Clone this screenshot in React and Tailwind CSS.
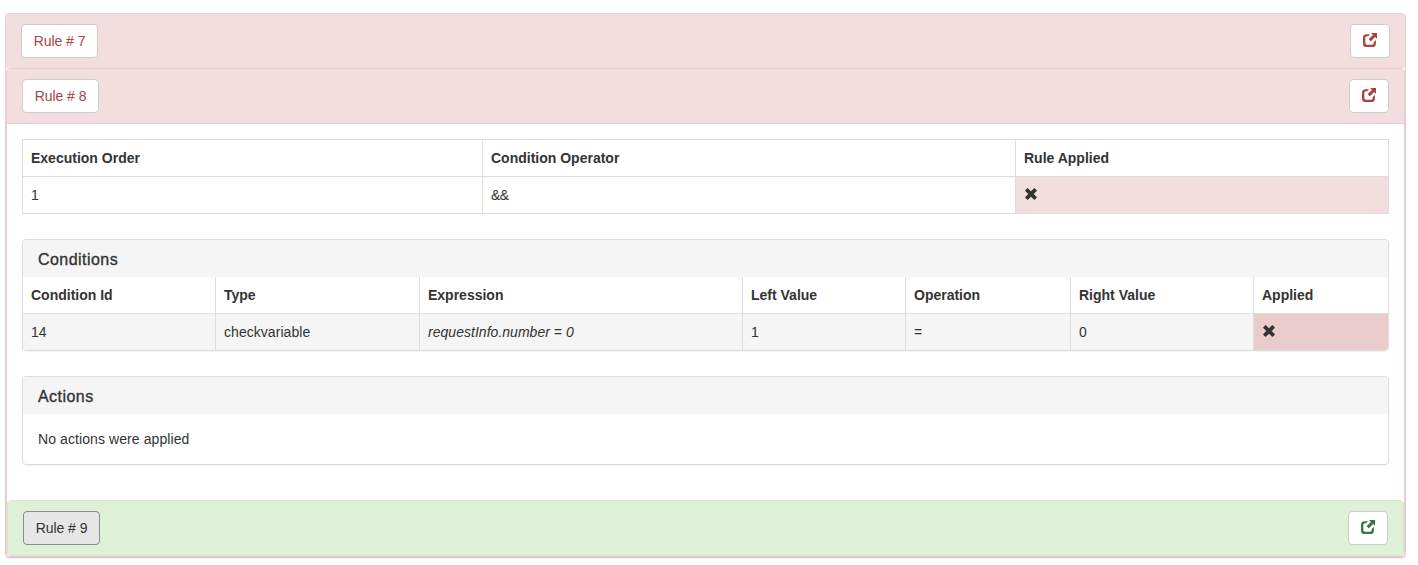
const cell = "px-2 text-left";

function OpenIcon() {
  return (
    <svg viewBox="0 0 14 14" className="h-3.5 w-3.5 fill-current" aria-hidden="true">
      <path d="M3.6 1.2H7L5.2 3.3H3.9Q2.3 3.3 2.3 4.9V10.1Q2.3 11.7 3.9 11.7H9.1Q10.7 11.7 10.7 10.1V9L12.9 7V10.4Q12.9 14 9.3 14H3.6Q0 14 0 10.4V4.8Q0 1.2 3.6 1.2ZM8.2 0H14V5.8L12.1 4.1L8.2 8Q7.8 8.4 7.4 8L6 6.6Q5.6 6.2 6 5.8L9.9 1.9Z" />
    </svg>
  );
}

function CrossIcon() {
  return (
    <svg viewBox="0 0 14 14" className="-mt-0.5 block h-3.5 w-3.5 fill-[#333]" aria-label="Not applied">
      <path d="M3.3 1.2Q3.6 1 3.9 1.3L7 4.3 10.1 1.3Q10.4 1 10.7 1.3L12.7 3.3Q13 3.6 12.7 3.9L9.7 7 12.7 10.1Q13 10.4 12.7 10.7L10.7 12.7Q10.4 13 10.1 12.7L7 9.7 3.9 12.7Q3.6 13 3.3 12.7L1.3 10.7Q1 10.4 1.3 10.1L4.3 7 1.3 3.9Q1 3.6 1.3 3.3Z" />
    </svg>
  );
}

function Heading({ label, color, buttonClass }) {
  return (
    <div className={"flex h-[54px] items-center justify-between px-[15px] " + color}>
      <button className={"h-[34px] w-[77px] rounded border text-center text-[14px] tracking-[-0.05px] " + buttonClass}>{label}</button>
      <button aria-label="Open rule" className="flex h-[34px] w-10 items-center justify-center rounded border border-[#ccc] bg-white pr-px pb-0.5">
        <OpenIcon />
      </button>
    </div>
  );
}

function Title({ children }) {
  return (
    <h3 className="flex h-[37px] items-center rounded-t-[3px] bg-[#f5f5f5] px-[15px] pt-0.5 text-[16px] font-normal tracking-[0.45px] [-webkit-text-stroke:0.35px_#333]">
      {children}
    </h3>
  );
}

const columns = [
  ["Condition Id", "w-[193px]"],
  ["Type", "w-[204px]"],
  ["Expression", "w-[323px]"],
  ["Left Value", "w-[163px]"],
  ["Operation", "w-[165px]"],
  ["Right Value", "w-[183px]"],
  ["Applied", ""],
];

function RuleTable() {
  return (
    <table className="mb-[25px] w-full table-fixed border-collapse border border-[#ddd]">
      <thead>
        <tr className="h-[37px]">
          <th className="w-[460px] border border-[#ddd] px-2 text-left">Execution Order</th>
          <th className="w-[533px] border border-[#ddd] px-2 text-left">Condition Operator</th>
          <th className="border border-[#ddd] px-2 text-left">Rule Applied</th>
        </tr>
      </thead>
      <tbody>
        <tr className="h-[37px]">
          <td className="border border-[#ddd] px-2">1</td>
          <td className="border border-[#ddd] px-2 tracking-[-0.5px]">&amp;&amp;</td>
          <td className="border border-[#ddd] bg-[#f2dede] px-2"><CrossIcon /></td>
        </tr>
      </tbody>
    </table>
  );
}

function Conditions() {
  return (
    <section className="mb-[25px] overflow-hidden rounded border border-[#ddd] shadow-[0_1px_1px_rgba(0,0,0,0.05)]">
      <Title>Conditions</Title>
      <table className="w-full table-fixed border-separate border-spacing-0">
        <thead>
          <tr className="h-[37px]">
            {columns.map(([name, width], i) => (
              <th key={name} className={cell + " border-b border-[#ddd] " + width + (i < 6 ? " border-r" : "")}>{name}</th>
            ))}
          </tr>
        </thead>
        <tbody className="bg-[#f5f5f5]">
          <tr className="h-9">
            <td className={cell + " border-r border-[#ddd]"}>14</td>
            <td className={cell + " border-r border-[#ddd] tracking-[0.05px]"}>checkvariable</td>
            <td className={cell + " border-r border-[#ddd] italic tracking-[0.03px]"}>requestInfo.number = 0</td>
            <td className={cell + " border-r border-[#ddd]"}>1</td>
            <td className={cell + " border-r border-[#ddd]"}>=</td>
            <td className={cell + " border-r border-[#ddd]"}>0</td>
            <td className={cell + " bg-[#ebcccc]"}><CrossIcon /></td>
          </tr>
        </tbody>
      </table>
    </section>
  );
}

function Actions() {
  return (
    <section className="rounded border border-[#ddd] shadow-[0_1px_1px_rgba(0,0,0,0.05)]">
      <Title>Actions</Title>
      <p className="h-[50px] p-[15px] tracking-[0.09px]">No actions were applied</p>
    </section>
  );
}

export default function App() {
  return (
    <div className="min-h-[565px] bg-white pt-[13px] pr-[12px] pl-[5px] font-['Liberation_Sans',Arial,sans-serif] text-[14px] leading-5 text-[#333]">
      <div className="rounded border border-[#ebccd1] bg-white shadow-[0_1px_1px_rgba(0,0,0,0.05)]">
        <Heading label="Rule # 7" color="rounded-t-[3px] bg-[#f2dede] text-[#a94442]" buttonClass="border-[#ccc] bg-white" />
        <div className="rounded border border-[#ebccd1] bg-white shadow-[0_1px_1px_rgba(0,0,0,0.05)]">
          <Heading label="Rule # 8" color="rounded-t-[3px] bg-[#f2dede] text-[#a94442]" buttonClass="border-[#ccc] bg-white" />
          <div className="border-t border-[#ebccd1] px-[15px] pt-[15px] pb-[35px]">
            <RuleTable />
            <Conditions />
            <Actions />
          </div>
          <div className="rounded border border-[#d6e9c6]">
            <Heading label="Rule # 9" color="rounded-[3px] bg-[#def0d8] text-[#3c763d]" buttonClass="border-[#8c8c8c] bg-[#e6e6e6] text-[#333]" />
          </div>
        </div>
      </div>
    </div>
  );
}
